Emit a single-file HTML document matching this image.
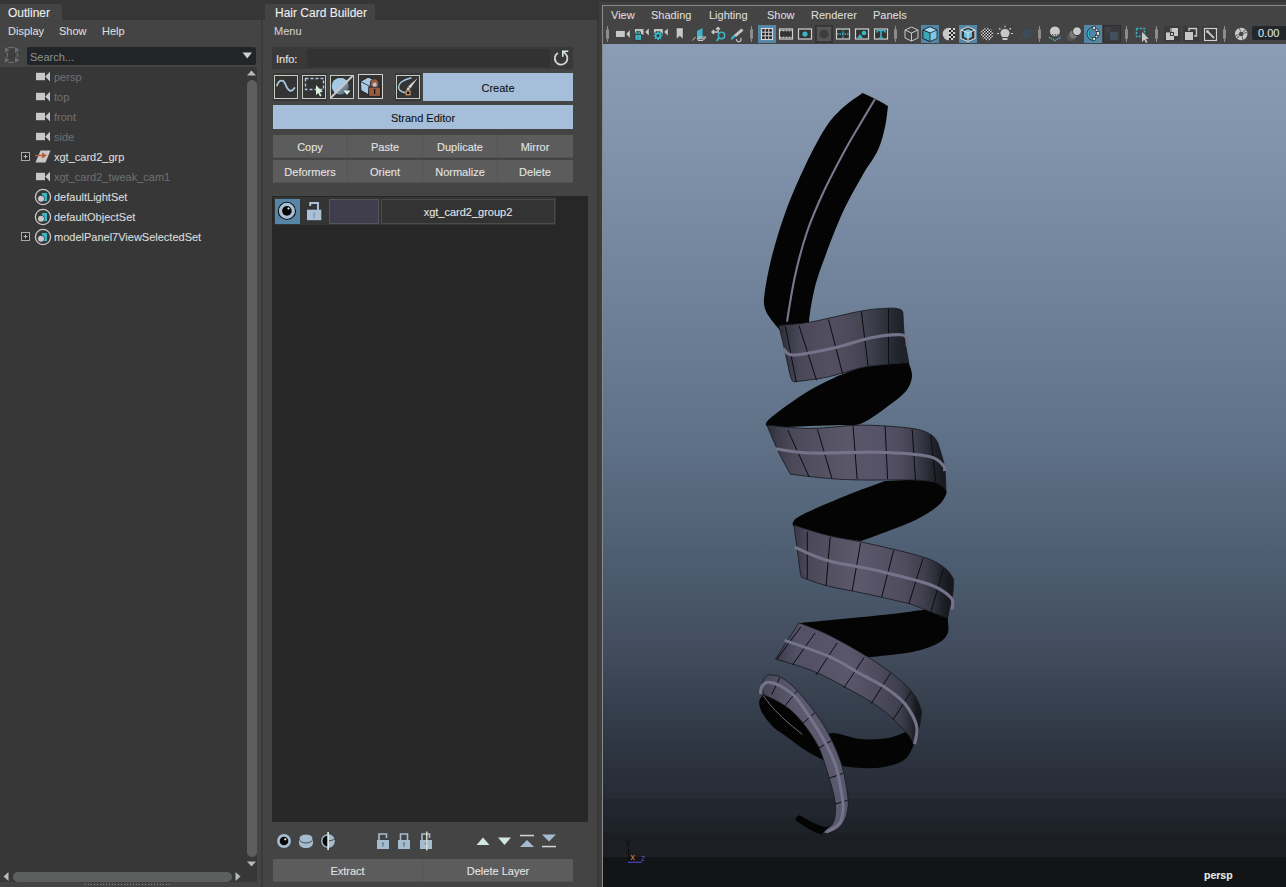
<!DOCTYPE html>
<html><head><meta charset="utf-8">
<style>
*{box-sizing:border-box;margin:0;padding:0}
html,body{width:1286px;height:887px;overflow:hidden;background:#444;font-family:"Liberation Sans",sans-serif;font-size:11px;color:#ddd}
.a{position:absolute}
.t{position:absolute;white-space:nowrap;line-height:1;-webkit-text-stroke:0.1px currentColor}
</style></head>
<body>
<!-- top strip -->
<div class="a" style="left:0;top:0;width:1286px;height:20px;background:#363636"></div>

<!-- ===== OUTLINER ===== -->
<div class="a" style="left:0;top:20px;width:261px;height:867px;background:#444"></div>
<div class="a" style="left:0;top:4px;width:62px;height:16px;background:#444;border-radius:2px 2px 0 0"></div>
<div class="t" style="left:8px;top:7px;font-size:12px;color:#eee">Outliner</div>
<div class="t" style="left:8px;top:26px;color:#ddd">Display</div>
<div class="t" style="left:59px;top:26px;color:#ddd">Show</div>
<div class="t" style="left:102px;top:26px;color:#ddd">Help</div>
<svg class="a" style="left:4px;top:46px" width="17" height="18"><rect x="4.5" y="2.5" width="7" height="13" fill="#3e3e3e"/><g fill="#6a6e71"><path d="M1 1 L5.3 3.9 L1 6.9Z"/><path d="M11 1 L15.4 3.9 L11 6.9Z"/><path d="M1 11.2 L5.3 14 L1 16.8Z"/><path d="M11 11.2 L15.4 14 L11 16.8Z"/><rect x="4.2" y="1" width="5.8" height="1.1"/><rect x="4.2" y="15.8" width="5.8" height="1.1"/><rect x="2.9" y="6.9" width="1.1" height="4.3"/><rect x="12.9" y="6.9" width="1.1" height="4.3"/></g></svg>
<!-- search -->
<div class="a" style="left:27px;top:47px;width:229px;height:18px;background:#222528;border-radius:2px"></div>
<div class="t" style="left:30px;top:52px;color:#8a8a8a">Search...</div>
<svg class="a" style="left:242px;top:52px" width="11" height="8"><path d="M0.5 0.5 H10 L5.25 6.5Z" fill="#cfcfcf"/></svg>
<!-- list -->
<div class="a" style="left:0;top:67px;width:257px;height:815px;background:#373737"></div>
<div class="a" style="left:261px;top:20px;width:2px;height:867px;background:#3a3a3a"></div>

<svg class="a" style="left:35px;top:71px" width="16" height="12"><rect x="1" y="1.8" width="9" height="7.4" fill="#c8c8c8"/><path d="M10.2 5.6 L15 0.8 L15 10.4 Z" fill="#c8c8c8"/></svg>
<div class="t" style="left:54px;top:72px;color:#6e6e6e">persp</div>
<svg class="a" style="left:35px;top:91px" width="16" height="12"><rect x="1" y="1.8" width="9" height="7.4" fill="#c8c8c8"/><path d="M10.2 5.6 L15 0.8 L15 10.4 Z" fill="#c8c8c8"/></svg>
<div class="t" style="left:54px;top:92px;color:#6e6e6e">top</div>
<svg class="a" style="left:35px;top:111px" width="16" height="12"><rect x="1" y="1.8" width="9" height="7.4" fill="#c8c8c8"/><path d="M10.2 5.6 L15 0.8 L15 10.4 Z" fill="#c8c8c8"/></svg>
<div class="t" style="left:54px;top:112px;color:#6e6e6e">front</div>
<svg class="a" style="left:35px;top:131px" width="16" height="12"><rect x="1" y="1.8" width="9" height="7.4" fill="#c8c8c8"/><path d="M10.2 5.6 L15 0.8 L15 10.4 Z" fill="#c8c8c8"/></svg>
<div class="t" style="left:54px;top:132px;color:#6e6e6e">side</div>
<svg class="a" style="left:33px;top:150px" width="20" height="14"><path d="M7.5 0.5 L17.5 0.5 L12.5 12.5 L2.5 12.5 Z" fill="#c8c8c8"/><path d="M2 5.5 L11 5.5" stroke="#b0603a" stroke-width="1.4"/><path d="M9 2.5 L14 5.5 L9 8.5 Z" fill="#b0603a"/></svg>
<svg class="a" style="left:20px;top:151px" width="11" height="11"><rect x="1.5" y="1.5" width="8" height="8" fill="#2b2b2b" stroke="#aaa" stroke-width="1"/><path d="M5.5 3.5V7.5M3.5 5.5H7.5" stroke="#bbb" stroke-width="1"/></svg>
<div class="t" style="left:54px;top:152px;color:#dcdcdc">xgt_card2_grp</div>
<svg class="a" style="left:35px;top:171px" width="16" height="12"><rect x="1" y="1.8" width="9" height="7.4" fill="#c8c8c8"/><path d="M10.2 5.6 L15 0.8 L15 10.4 Z" fill="#c8c8c8"/></svg>
<div class="t" style="left:54px;top:172px;color:#6e6e6e">xgt_card2_tweak_cam1</div>
<svg class="a" style="left:34px;top:188px" width="18" height="18"><circle cx="9" cy="9" r="7.6" fill="none" stroke="#c8c8c8" stroke-width="1.3"/><rect x="8" y="5" width="5" height="8" fill="#3db5c4"/><circle cx="7" cy="10.5" r="3.6" fill="#373737"/><circle cx="7" cy="10.8" r="3" fill="#c8c8c8"/></svg>
<div class="t" style="left:54px;top:192px;color:#dcdcdc">defaultLightSet</div>
<svg class="a" style="left:34px;top:208px" width="18" height="18"><circle cx="9" cy="9" r="7.6" fill="none" stroke="#c8c8c8" stroke-width="1.3"/><rect x="8" y="5" width="5" height="8" fill="#3db5c4"/><circle cx="7" cy="10.5" r="3.6" fill="#373737"/><circle cx="7" cy="10.8" r="3" fill="#c8c8c8"/></svg>
<div class="t" style="left:54px;top:212px;color:#dcdcdc">defaultObjectSet</div>
<svg class="a" style="left:34px;top:228px" width="18" height="18"><circle cx="9" cy="9" r="7.6" fill="none" stroke="#c8c8c8" stroke-width="1.3"/><rect x="8" y="5" width="5" height="8" fill="#3db5c4"/><circle cx="7" cy="10.5" r="3.6" fill="#373737"/><circle cx="7" cy="10.8" r="3" fill="#c8c8c8"/></svg>
<svg class="a" style="left:20px;top:231px" width="11" height="11"><rect x="1.5" y="1.5" width="8" height="8" fill="#2b2b2b" stroke="#aaa" stroke-width="1"/><path d="M5.5 3.5V7.5M3.5 5.5H7.5" stroke="#bbb" stroke-width="1"/></svg>
<div class="t" style="left:54px;top:232px;color:#dcdcdc">modelPanel7ViewSelectedSet</div>
<!-- vertical scrollbar -->
<svg class="a" style="left:246px;top:70px" width="11" height="6"><path d="M1 5.5 L5.5 0.5 L10 5.5Z" fill="#b4bcb8"/></svg>
<div class="a" style="left:247px;top:80px;width:10px;height:777px;background:#5d5f5e;border-radius:5px"></div>
<svg class="a" style="left:246px;top:861px" width="11" height="6"><path d="M1 0.5 L5.5 5.5 L10 0.5Z" fill="#b4bcb8"/></svg>
<!-- horizontal scrollbar -->
<svg class="a" style="left:2px;top:871px" width="7" height="11"><path d="M6.5 1 L1.5 5.5 L6.5 10Z" fill="#b4bcb8"/></svg>
<div class="a" style="left:13px;top:872px;width:219px;height:10px;background:#5d5f5e;border-radius:5px"></div>
<svg class="a" style="left:235px;top:871px" width="7" height="11"><path d="M0.5 1 L5.5 5.5 L0.5 10Z" fill="#b4bcb8"/></svg>
<div class="a" style="left:85px;top:884px;width:86px;height:1px;background:repeating-linear-gradient(90deg,#888 0 1px,transparent 1px 3px)"></div>

<!-- ===== HAIR CARD BUILDER ===== -->
<div class="a" style="left:263px;top:20px;width:334px;height:867px;background:#444"></div>
<div class="a" style="left:265px;top:4px;width:110px;height:16px;background:#444;border-radius:2px 2px 0 0"></div>
<div class="t" style="left:275px;top:7px;font-size:12px;color:#eee">Hair Card Builder</div>
<div class="t" style="left:274px;top:26px;color:#ccc">Menu</div>


<!-- info -->
<div class="a" style="left:272px;top:47px;width:301px;height:22px;background:#393939"></div>
<div class="a" style="left:307px;top:49px;width:243px;height:18px;background:#323232;border-radius:2px"></div>
<div class="t" style="left:276px;top:54px;color:#e8e8e8">Info:</div>
<svg class="a" style="left:552px;top:49px" width="18" height="18"><path d="M5.85 3.9 A6.3 6.3 0 1 0 13.6 4.9 L11 2.6" fill="none" stroke="#d2d6d0" stroke-width="1.8"/><path d="M10 1.4 H16.3 V3 H11.6 V7.8 H10Z" fill="#d6ece0"/></svg>
<!-- icon buttons -->
<div class="a" style="left:273px;top:73px;width:26px;height:28px;background:#373737"></div>
<div class="a" style="left:274px;top:75px;width:23.5px;height:23.5px;background:#333;border:1.5px solid #c3cbbf"></div>
<svg class="a" style="left:274px;top:75px" width="24" height="24"><path d="M3 10.5 C5 4.5 9.5 4 11.5 9.5 S17 18.5 20.5 13" fill="none" stroke="#a8c6de" stroke-width="1.8" stroke-linecap="round"/></svg>
<div class="a" style="left:301px;top:73px;width:26px;height:28px;background:#373737"></div>
<div class="a" style="left:302px;top:75px;width:23.5px;height:23.5px;background:#333;border:1.5px solid #c3cbbf"></div>
<svg class="a" style="left:302px;top:75px" width="24" height="24"><rect x="3.5" y="3.5" width="18" height="11" fill="none" stroke="#a8c6de" stroke-width="1.4" stroke-dasharray="3 2"/><path d="M14 10 L14 20 L16.3 18 L18 21.5 L19.5 20.8 L17.8 17.3 L20.8 17Z" fill="#d9efe0"/></svg>
<div class="a" style="left:330px;top:75px;width:23.5px;height:23.5px;background:#333;border:1.5px solid #c3cbbf"></div>
<svg class="a" style="left:330px;top:75px" width="24" height="24"><defs><linearGradient id="sg" x1="0" y1="0" x2="1" y2="1"><stop offset="0.45" stop-color="#8fa9c0"/><stop offset="1" stop-color="#445466"/></linearGradient><clipPath id="cl"><path d="M0 0 H23 L0 23Z"/></clipPath></defs><circle cx="10.3" cy="11.3" r="8.4" fill="url(#sg)"/><circle cx="10.3" cy="11.3" r="8.4" fill="#a6c8e2" clip-path="url(#cl)"/><path d="M1 22.5 L22.5 1" stroke="#c9c9c6" stroke-width="1.9"/><path d="M13.5 15.5 L20.5 15.5 L17 20Z" fill="#d8f2e4"/></svg>
<div class="a" style="left:358px;top:74px;width:25px;height:25px;background:#333;border:1.5px solid #d0d0d0"></div>
<svg class="a" style="left:358px;top:74px" width="25" height="25"><path d="M2.4 7.5 L10 3.2 L17 5.8 L17 14 L10.6 20.8 L3 16.6 Z" fill="#a9c9e5" stroke="#1c1c1c" stroke-width="0.9"/><path d="M2.4 7.5 L11.8 12.3 L17 9.5 M11.8 12.3 L10.6 20.8" fill="none" stroke="#1c1c1c" stroke-width="0.8"/><path d="M12.3 13.4 V9 A3.7 3.7 0 0 1 20.8 9 V13.4Z" fill="#9a5c40" stroke="#1c1c1c" stroke-width="0.8"/><path d="M14.9 13.4 V10.3 A1.8 1.8 0 0 1 18.5 10.3 V13.4Z" fill="#a9c9e5"/><rect x="10.7" y="13.1" width="11.8" height="9.2" fill="#9a5c40" stroke="#1c1c1c" stroke-width="0.8"/><rect x="16" y="15" width="1.3" height="5" fill="#151515"/></svg>
<div class="a" style="left:395px;top:73px;width:26px;height:28px;background:#373737"></div>
<div class="a" style="left:396px;top:75px;width:23.5px;height:23.5px;background:#333;border:1.5px solid #c3cbbf"></div>
<svg class="a" style="left:396px;top:75px" width="24" height="24"><path d="M15.5 2.8 C9 4.5 3 7.5 2.6 11.5 C2.3 14.5 5 17 9.5 17.8" fill="none" stroke="#a8c8e0" stroke-width="1.4"/><path d="M21 3.3 L14.5 8.8 L11.5 12 L9.8 15 L12.8 15.6 L15.6 12.2 L17.5 9.5 L21.5 3.8Z" fill="#d4d8d0" stroke="#1e1e1e" stroke-width="0.6"/><path d="M11.6 12.2 L14.8 13.6" stroke="#555" stroke-width="0.6"/><rect x="10.2" y="15.9" width="3.8" height="3.9" fill="#111" stroke="#e8aa6a" stroke-width="1.1"/></svg>
<!-- Create -->
<div class="a" style="left:423px;top:73px;width:150px;height:28px;background:#a5bfdb"></div>
<div class="t" style="left:423px;top:83px;width:150px;text-align:center;color:#111">Create</div>
<!-- Strand Editor -->
<div class="a" style="left:273px;top:105px;width:300px;height:24px;background:#a5bfdb"></div>
<div class="t" style="left:273px;top:113px;width:300px;text-align:center;color:#111">Strand Editor</div>
<div class="a" style="left:273px;top:135px;width:300px;height:23px;background:#5c5c5c;border-bottom:1px solid #525252"></div>
<div class="a" style="left:347px;top:135px;width:1px;height:22px;background:#545454"></div>
<div class="a" style="left:422px;top:135px;width:1px;height:22px;background:#545454"></div>
<div class="a" style="left:497px;top:135px;width:1px;height:22px;background:#545454"></div>
<div class="a" style="left:273px;top:160px;width:300px;height:23px;background:#5c5c5c;border-bottom:1px solid #525252"></div>
<div class="a" style="left:347px;top:160px;width:1px;height:22px;background:#545454"></div>
<div class="a" style="left:422px;top:160px;width:1px;height:22px;background:#545454"></div>
<div class="a" style="left:497px;top:160px;width:1px;height:22px;background:#545454"></div>
<div class="t" style="left:273px;top:142px;width:74px;text-align:center;color:#e4e4e4">Copy</div>
<div class="t" style="left:348px;top:142px;width:74px;text-align:center;color:#e4e4e4">Paste</div>
<div class="t" style="left:423px;top:142px;width:74px;text-align:center;color:#e4e4e4">Duplicate</div>
<div class="t" style="left:498px;top:142px;width:74px;text-align:center;color:#e4e4e4">Mirror</div>
<div class="t" style="left:273px;top:167px;width:74px;text-align:center;color:#e4e4e4">Deformers</div>
<div class="t" style="left:348px;top:167px;width:74px;text-align:center;color:#e4e4e4">Orient</div>
<div class="t" style="left:423px;top:167px;width:74px;text-align:center;color:#e4e4e4">Normalize</div>
<div class="t" style="left:498px;top:167px;width:74px;text-align:center;color:#e4e4e4">Delete</div>

<!-- layer list -->
<div class="a" style="left:272px;top:196px;width:316px;height:626px;background:#272727"></div>
<div class="a" style="left:274px;top:197px;width:282px;height:28px;background:#343434"></div>
<div class="a" style="left:275px;top:199px;width:25px;height:25px;background:#5586a8"></div>
<svg class="a" style="left:275px;top:199px" width="25" height="25"><circle cx="11.9" cy="11.9" r="8.6" fill="#a9c0d6" stroke="#111" stroke-width="1.1"/><circle cx="11.9" cy="11.9" r="4.8" fill="#050505"/><circle cx="13.5" cy="9.5" r="1.1" fill="#e8f4ea"/></svg>
<svg class="a" style="left:305px;top:200px" width="18" height="22"><path d="M5.2 6 V3 H13 V10" fill="none" stroke="#a9c0d6" stroke-width="2"/><rect x="2" y="9.7" width="14.3" height="10.5" fill="#a9c0d6"/><rect x="8.3" y="12" width="1.8" height="6" fill="#8aa0b2"/></svg>
<div class="a" style="left:329px;top:199px;width:50px;height:25px;background:#3f3d4b;border:1px solid #55545a"></div>
<div class="a" style="left:381px;top:199px;width:174px;height:25px;background:#333;border:1px solid #4a4a4a"></div>
<div class="t" style="left:381px;top:207px;width:174px;text-align:center;color:#e4e4e4">xgt_card2_group2</div>


<!-- bottom icons -->
<svg class="a" style="left:275px;top:832px" width="17" height="18"><circle cx="9" cy="9" r="7.4" fill="#a5bcd0" stroke="#222" stroke-width="0.6"/><circle cx="9" cy="9" r="4.3" fill="#080808"/><circle cx="10.3" cy="7.3" r="1.1" fill="#eee"/></svg>
<svg class="a" style="left:298px;top:832px" width="17" height="18"><path d="M1 6.5 V11 C1 14 4 16 8 16 C12 16 15 14 15 11 V6.5Z" fill="#a5bcd0"/><ellipse cx="8" cy="6.5" rx="7" ry="4.5" fill="#a5bcd0" stroke="#2c2c2c" stroke-width="0.8"/></svg>
<svg class="a" style="left:320px;top:831px" width="17" height="20"><circle cx="8" cy="10" r="7.3" fill="#a5bcd0" stroke="#222" stroke-width="0.6"/><path d="M8 4.5 A5.5 5.5 0 0 0 8 15.5Z" fill="#080808"/><path d="M8 10 C10 10 14 9 15 7.5" fill="none" stroke="#2c2c2c" stroke-width="0.8"/><rect x="7.3" y="1" width="1.6" height="18" fill="#e0eee4"/></svg>
<svg class="a" style="left:376px;top:832px" width="14" height="18"><path d="M3 8 V2 H10.5 V6" fill="none" stroke="#a5bcd0" stroke-width="1.6"/><rect x="1" y="8" width="12" height="9" fill="#a5bcd0"/><circle cx="7" cy="11.5" r="1.3" fill="#6f8698"/><rect x="6.4" y="11.5" width="1.2" height="3.5" fill="#6f8698"/></svg>
<svg class="a" style="left:397px;top:832px" width="14" height="18"><path d="M3.5 8 V2 H10.5 V8" fill="none" stroke="#a5bcd0" stroke-width="1.6"/><rect x="1" y="8" width="12" height="9" fill="#a5bcd0"/><circle cx="7" cy="11.5" r="1.3" fill="#6f8698"/><rect x="6.4" y="11.5" width="1.2" height="3.5" fill="#6f8698"/></svg>
<svg class="a" style="left:419px;top:831px" width="14" height="20"><path d="M3 9 V3 H10.5 V7" fill="none" stroke="#a5bcd0" stroke-width="1.6"/><rect x="1" y="9" width="12" height="9" fill="#a5bcd0"/><circle cx="7" cy="12.5" r="1.3" fill="#6f8698"/><rect x="7" y="0.5" width="1.5" height="19" fill="#d8d8c8"/></svg>
<svg class="a" style="left:475px;top:834px" width="84" height="15"><path d="M1.5 11 L8 3.5 L14.5 11Z" fill="#d2e8dc"/><path d="M23 3.5 L29.5 11 L36 3.5Z" fill="#d2e8dc"/><rect x="45" y="0.8" width="14" height="1.5" fill="#d4d4d4"/><path d="M45 13 L52 6 L59 13Z" fill="#a5bcd0"/><path d="M67 0.5 L74 7.5 L81 0.5Z" fill="#a5bcd0"/><rect x="67" y="11.8" width="14" height="1.5" fill="#d4d4d4"/></svg>
<!-- Extract / Delete Layer -->
<div class="a" style="left:273px;top:859px;width:300px;height:23px;background:#5c5c5c;border-bottom:1px solid #525252"></div><div class="a" style="left:422px;top:859px;width:1px;height:22px;background:#545454"></div>
<div class="t" style="left:273px;top:866px;width:149px;text-align:center;color:#e4e4e4">Extract</div>

<div class="t" style="left:423px;top:866px;width:150px;text-align:center;color:#e4e4e4">Delete Layer</div>

<!-- ===== VIEWPORT ===== -->
<div class="a" style="left:597px;top:0;width:2px;height:887px;background:#363636"></div>
<div class="a" style="left:599px;top:2px;width:687px;height:885px;background:#3e3e3e"></div>
<div class="a" style="left:602px;top:5px;width:684px;height:882px;background:#444;border-left:1px solid #8a8a8a;border-top:1px solid #8a8a8a"></div>
<div class="a" style="left:603px;top:44px;width:683px;height:843px;background:linear-gradient(#8a9db4 0px,#8194ac 96px,#5f7187 396px,#506075 496px,#434f60 596px,#2f3744 696px,#262b34 755px,#22262e 755px,#22262e 773px,#1e2229 773px,#1e2229 789px,#1b1e23 789px,#1b1e23 813px,#131416 813px)"></div>

<!-- viewport menu -->
<div class="t" style="left:611px;top:10px;color:#dcdcdc">View</div>
<div class="t" style="left:651px;top:10px;color:#dcdcdc">Shading</div>
<div class="t" style="left:709px;top:10px;color:#dcdcdc">Lighting</div>
<div class="t" style="left:767px;top:10px;color:#dcdcdc">Show</div>
<div class="t" style="left:811px;top:10px;color:#dcdcdc">Renderer</div>
<div class="t" style="left:873px;top:10px;color:#dcdcdc">Panels</div>
<div class="a" style="left:607px;top:26px;width:1px;height:16px;background:#8c8c8c"></div><div class="a" style="left:606px;top:29px;width:3px;height:10px;background:#8c8c8c;border-radius:1px"></div><svg class="a" style="left:614px;top:26px" width="140" height="17">
<g fill="#c8c8c8" stroke="#262626" stroke-width="0.3">
<rect x="1.8" y="4.8" width="9.2" height="6.3"/><path d="M12 8 L16 3.8 L16 12.2Z"/>
<rect x="20.8" y="2.9" width="9" height="6"/><path d="M31 6 L35 2 L35 10Z"/>
<rect x="39.8" y="2.9" width="9.2" height="6"/><path d="M50 6 L54 2 L54 10Z"/>
<path d="M62.5 2 H69 V13 L65.75 10 L62.5 13Z"/>
</g>
<path d="M22.6 8.8 V7.6 A1.65 1.65 0 0 1 25.9 7.6 V8.8" fill="none" stroke="#222" stroke-width="2.3"/>
<path d="M22.6 8.8 V7.6 A1.65 1.65 0 0 1 25.9 7.6 V8.8" fill="none" stroke="#3db5c4" stroke-width="1.2"/>
<rect x="21" y="8.6" width="6.4" height="5.6" fill="#3db5c4" stroke="#222" stroke-width="0.6"/><rect x="23.7" y="10.4" width="1" height="2" fill="#3a7a88"/>
<circle cx="44" cy="9.7" r="4.6" fill="#262626"/>
<circle cx="44" cy="9.7" r="3.2" fill="#3db5c4"/><rect x="46.70" y="8.80" width="1.8" height="1.8" fill="#3db5c4"/><rect x="45.65" y="11.35" width="1.8" height="1.8" fill="#3db5c4"/><rect x="43.10" y="12.40" width="1.8" height="1.8" fill="#3db5c4"/><rect x="40.55" y="11.35" width="1.8" height="1.8" fill="#3db5c4"/><rect x="39.50" y="8.80" width="1.8" height="1.8" fill="#3db5c4"/><rect x="40.55" y="6.25" width="1.8" height="1.8" fill="#3db5c4"/><rect x="43.10" y="5.20" width="1.8" height="1.8" fill="#3db5c4"/><rect x="45.65" y="6.25" width="1.8" height="1.8" fill="#3db5c4"/><circle cx="44" cy="9.7" r="1.5" fill="#3a3a3a"/>
<g fill="#3db5c4">


<path d="M83 5 L88.5 2 L88.5 11.5 L83 14.5Z"/>
<circle cx="107.5" cy="9.5" r="3.2" fill="none" stroke="#3db5c4" stroke-width="1.5"/><path d="M105.3 11.8 L102.5 14.8" stroke="#3db5c4" stroke-width="1.8"/>
<path d="M117.5 11 L120.5 8.5 L122 10 L119 13 L116.8 14Z"/>
</g>
<g fill="none" stroke="#c8c8c8" stroke-width="1">
<path d="M78.5 14.5 L81.5 11 M84 11 H92 L89 14.5 H84 M83 12.8 H90.5"/>
<path d="M98 6 H104 V1.5 M102 3.5 L104 1.5 L106 3.5 M100 4 L98 6 L100 8" stroke-width="1.4"/>
<path d="M120 9 L127.5 2.5 L129.5 4.5 L122 11Z" fill="#c8c8c8" stroke="none"/>
<path d="M122.5 13 A2.3 2.3 0 1 0 126.5 12" stroke-width="1.2"/>
</g>
</svg><div class="a" style="left:751px;top:26px;width:1px;height:16px;background:#8c8c8c"></div><div class="a" style="left:750px;top:29px;width:3px;height:10px;background:#8c8c8c;border-radius:1px"></div>
<div class="a" style="left:758px;top:25px;width:18px;height:18px;background:#5285a6"></div>
<svg class="a" style="left:758px;top:25px" width="132" height="18">
<rect x="3.5" y="3.5" width="11" height="11" fill="#222" stroke="#d8d8d8" stroke-width="1.2"/>
<path d="M7.2 3.5V14.5 M10.8 3.5V14.5 M3.5 7.2H14.5 M3.5 10.8H14.5" stroke="#d8d8d8" stroke-width="1"/>
<rect x="21.5" y="4" width="13" height="10" fill="#333" stroke="#d0d0d0" stroke-width="1.2"/>
<path d="M21.5 5.5H34.5 M21.5 12.5H34.5" stroke="#d0d0d0" stroke-width="1.5" stroke-dasharray="2 1"/>
<rect x="40.5" y="4" width="13" height="10" fill="#333" stroke="#d0d0d0" stroke-width="1.2"/>
<circle cx="47" cy="9" r="2.6" fill="#3db5c4"/>
<rect x="57.5" y="0.5" width="17" height="17" fill="#3a3a3a" stroke="#333" stroke-width="1"/>
<rect x="59" y="2" width="14" height="14" fill="#555"/>
<circle cx="66" cy="9" r="4.5" fill="#3e3e3e"/>
<rect x="78.5" y="4" width="13" height="10" fill="#333" stroke="#d0d0d0" stroke-width="1.2"/>
<path d="M79 9H91 M85 4V14" stroke="#3db5c4" stroke-width="1.3" stroke-dasharray="1.5 1"/>
<rect x="97.5" y="4" width="13" height="10" fill="#333" stroke="#d0d0d0" stroke-width="1.2"/>
<path d="M99 13 L102 9 L105 13Z" fill="#3db5c4"/><circle cx="106" cy="8" r="2.3" fill="#3db5c4"/>
<rect x="116.5" y="4" width="13" height="10" fill="#333" stroke="#d0d0d0" stroke-width="1.2"/>
<path d="M119 5.5H127V7.5M119 5.5V7.5 M123 5.5V13 M121 13H125" fill="none" stroke="#3db5c4" stroke-width="1.6"/>
</svg>
<div class="a" style="left:895px;top:26px;width:1px;height:16px;background:#8c8c8c"></div><div class="a" style="left:894px;top:29px;width:3px;height:10px;background:#8c8c8c;border-radius:1px"></div>
<div class="a" style="left:921px;top:25px;width:18px;height:18px;background:#5285a6"></div>
<div class="a" style="left:959px;top:25px;width:18px;height:18px;background:#5285a6"></div>
<svg class="a" style="left:903px;top:25px" width="135" height="18">
<g fill="none" stroke="#c8c8c8" stroke-width="1">
<path d="M2 5 L8.5 2 L15 5 L15 13 L8.5 16 L2 13Z M2 5 L8.5 8 L15 5 M8.5 8V16"/>
</g>
<path d="M20 5 L27 1.8 L34 5 L34 13.5 L27 16.5 L20 13.5Z" fill="#7ec6e6" stroke="#222" stroke-width="0.8"/>
<path d="M20 5 L27 8 L34 5 L27 1.8Z" fill="#a6dcf2" stroke="#222" stroke-width="0.8"/>
<path d="M20 5 L27 8 V16.5 L20 13.5Z" fill="#3aa8b8" stroke="#222" stroke-width="0.8"/>
<circle cx="46" cy="9" r="6.3" fill="#c8c8c8"/>
<path d="M46 2.7 A6.3 6.3 0 0 1 46 15.3Z" fill="#222"/>
<g fill="#d0d0d0"><rect x="46" y="3" width="2" height="2"/><rect x="48" y="5" width="2" height="2"/><rect x="46" y="7" width="2" height="2"/><rect x="48" y="9" width="2" height="2"/><rect x="46" y="11" width="2" height="2"/><rect x="48" y="13" width="2" height="2"/><rect x="50" y="3" width="2" height="2"/><rect x="50" y="7" width="2" height="2"/><rect x="50" y="11" width="2" height="2"/></g>
<path d="M58 5 L65 1.8 L72 5 L72 13.5 L65 16.5 L58 13.5Z" fill="#333" stroke="#ddd" stroke-width="1.1"/>
<path d="M61 6 L65 4 L69 6 L69 12 L65 14 L61 12Z" fill="#6ec0e0"/>
<path d="M58 5 L65 8 L72 5 M65 8V16.5" fill="none" stroke="#ddd" stroke-width="1"/>
<defs><pattern id="chk" width="3" height="3" patternUnits="userSpaceOnUse"><rect width="3" height="3" fill="#1a1a1a"/><rect width="1.5" height="1.5" fill="#d8d8d8"/><rect x="1.5" y="1.5" width="1.5" height="1.5" fill="#d8d8d8"/></pattern></defs>
<circle cx="84" cy="9" r="6.3" fill="url(#chk)"/>
<path d="M102 4 A4 4 0 0 1 106 10 L105 12 H99 L98 10 A4 4 0 0 1 102 4Z" fill="#c8c8c8"/>
<rect x="99.5" y="13" width="5" height="2" fill="#c8c8c8"/>
<g fill="#c8c8c8"><rect x="101.5" y="0.5" width="1" height="2"/><rect x="96" y="3" width="1.5" height="1.5"/><rect x="106.5" y="3" width="1.5" height="1.5"/><rect x="94" y="8" width="2" height="1"/><rect x="108" y="8" width="2" height="1"/></g>
<circle cx="124" cy="9" r="5" fill="#3d4c58"/>
<path d="M115 12 L119 15" stroke="#4a4a4a" stroke-width="1.6"/>
</svg>
<div class="a" style="left:1039px;top:26px;width:1px;height:16px;background:#8c8c8c"></div><div class="a" style="left:1038px;top:29px;width:3px;height:10px;background:#8c8c8c;border-radius:1px"></div>
<div class="a" style="left:1084px;top:25px;width:18px;height:18px;background:#5285a6"></div>
<svg class="a" style="left:1046px;top:25px" width="80" height="18">
<path d="M3 12.2 L9 15.6 L15 12.2" fill="none" stroke="#36b0c4" stroke-width="1.6" stroke-dasharray="1.3 0.9"/>
<circle cx="8.9" cy="6.4" r="5.4" fill="#c9c9c9" stroke="#2a2a2a" stroke-width="0.7"/>
<path d="M6.3 9 L7.3 10.8 M8.8 9 L9.8 10.8 M11.3 9 L12.3 10.8" stroke="#333" stroke-width="0.9"/>
<circle cx="25" cy="12" r="4" fill="#585858"/>
<circle cx="27.6" cy="9.2" r="4" fill="#7a7a7a"/>
<circle cx="31" cy="6.2" r="4.4" fill="#c9c9c9" stroke="#222" stroke-width="0.8"/>
<path d="M47.5 3.2 A5.6 5.6 0 0 0 47.5 14.4" fill="none" stroke="#1e2a30" stroke-width="2.6"/>
<path d="M47.5 3.4 A5.4 5.4 0 0 0 47.5 14.2" fill="none" stroke="#3cbccc" stroke-width="1.5"/>
<g fill="#ececec" stroke="#1a1a1a" stroke-width="0.6"><rect x="46.8" y="1.6" width="2.6" height="2.6"/><rect x="49.2" y="4" width="2.6" height="2.6"/><rect x="50.6" y="6.6" width="2.6" height="3.6"/><rect x="49.2" y="10.2" width="2.6" height="2.6"/><rect x="46.8" y="12.6" width="2.6" height="2.6"/></g>
<rect x="57.5" y="0.5" width="17" height="17" fill="#3a3a3a" stroke="#303030"/>
<rect x="64" y="7" width="8" height="8" fill="#3f5060"/>
<g fill="#3f5060"><rect x="59.5" y="3" width="1.2" height="1.2"/><rect x="61.5" y="3" width="1.2" height="1.2"/><rect x="63.5" y="3" width="1.2" height="1.2"/><rect x="60.5" y="4.5" width="1.2" height="1.2"/><rect x="62.5" y="4.5" width="1.2" height="1.2"/><rect x="59.5" y="6" width="1.2" height="1.2"/><rect x="61.5" y="6" width="1.2" height="1.2"/><rect x="60.5" y="7.5" width="1.2" height="1.2"/></g>
</svg>
<div class="a" style="left:1126px;top:26px;width:1px;height:16px;background:#8c8c8c"></div><div class="a" style="left:1125px;top:29px;width:3px;height:10px;background:#8c8c8c;border-radius:1px"></div><svg class="a" style="left:1134px;top:26px" width="16" height="17"><rect x="2.5" y="2.5" width="8" height="8" fill="none" stroke="#3db5c4" stroke-width="1.5" stroke-dasharray="2 1.3"/><path d="M8 6 L8 16 L10.3 13.8 L12 17 L13.5 16.3 L11.8 13 L14.8 12.8Z" fill="#c8c8c8"/></svg><div class="a" style="left:1156px;top:26px;width:1px;height:16px;background:#8c8c8c"></div><div class="a" style="left:1155px;top:29px;width:3px;height:10px;background:#8c8c8c;border-radius:1px"></div>
<div class="a" style="left:1164px;top:26px;width:16px;height:16px;background:#3b3b3b"></div>
<div class="a" style="left:1183px;top:26px;width:16px;height:16px;background:#3b3b3b"></div>
<div class="a" style="left:1202px;top:26px;width:16px;height:16px;background:#3b3b3b"></div>
<svg class="a" style="left:1164px;top:26px" width="56" height="16">
<path d="M6 2 H14 V10 H10 V14 H2 V6 H6Z" fill="#c8c8c8"/>
<path d="M6 6 H10 V10 H6Z" fill="#3b3b3b"/><path d="M7 7 H9 V9 H7Z" fill="#c8c8c8"/>
<path d="M7 2 V6 H2" fill="none" stroke="#3b3b3b" stroke-width="0.8"/>
<rect x="21" y="6" width="8" height="8" fill="#c8c8c8"/>
<path d="M25 5 V2.5 H32.5 V10 H30" fill="none" stroke="#c8c8c8" stroke-width="1.4"/>
<rect x="40.5" y="2.5" width="12" height="12" fill="none" stroke="#d0d0d0" stroke-width="1.2"/>
<path d="M43 5 L50 12" stroke="#c8c8c8" stroke-width="1.8"/><circle cx="43.5" cy="5.5" r="1.5" fill="#c8c8c8"/>
</svg>
<div class="a" style="left:1224px;top:26px;width:1px;height:16px;background:#8c8c8c"></div><div class="a" style="left:1223px;top:29px;width:3px;height:10px;background:#8c8c8c;border-radius:1px"></div><svg class="a" style="left:1234px;top:27px" width="15" height="15"><circle cx="7.2" cy="7" r="6.2" fill="#c8c8c8"/><g fill="#444"><path d="M7.2 7 L5 1.5 L6 1.2Z"/><path d="M7.2 7 L12.5 5 L12.8 6Z"/><path d="M7.2 7 L9.6 12.5 L8.6 12.8Z"/><path d="M7.2 7 L1.8 9 L1.6 8Z"/><path d="M7.2 7 L11 2.5 L11.6 3.2Z"/><path d="M7.2 7 L3.5 11.5 L2.8 10.8Z"/></g><circle cx="7.2" cy="7" r="2.3" fill="#444"/></svg>
<div class="a" style="left:1252px;top:26px;width:34px;height:14px;background:#23272a;border-radius:2px 0 0 2px"></div>
<div class="t" style="left:1258px;top:28px;color:#dde6ee">0.00</div>


<!--SPIRAL--><svg class="a" style="left:603px;top:44px" width="683" height="843"><defs><linearGradient id="b1" gradientUnits="userSpaceOnUse" x1="176" y1="0" x2="306" y2="0"><stop offset="0" stop-color="#2a2e38"/><stop offset="0.06" stop-color="#363844"/><stop offset="0.16" stop-color="#4a4858"/><stop offset="0.39" stop-color="#534f61"/><stop offset="0.58" stop-color="#4a4858"/><stop offset="0.7" stop-color="#3e3f4c"/><stop offset="0.815" stop-color="#2e323c"/><stop offset="0.89" stop-color="#23272f"/><stop offset="0.95" stop-color="#1e2128"/><stop offset="1" stop-color="#22252c"/></linearGradient><linearGradient id="b2" gradientUnits="userSpaceOnUse" x1="164" y1="0" x2="343" y2="0"><stop offset="0" stop-color="#2c2e38"/><stop offset="0.06" stop-color="#3e3d4a"/><stop offset="0.15" stop-color="#4c4a5a"/><stop offset="0.45" stop-color="#5a5769"/><stop offset="0.63" stop-color="#55526a"/><stop offset="0.74" stop-color="#4f4c5e"/><stop offset="0.83" stop-color="#3e3e4c"/><stop offset="0.88" stop-color="#30323d"/><stop offset="0.94" stop-color="#1e2128"/><stop offset="1" stop-color="#15171b"/></linearGradient><linearGradient id="b3" gradientUnits="userSpaceOnUse" x1="191" y1="0" x2="351" y2="0"><stop offset="0" stop-color="#383846"/><stop offset="0.08" stop-color="#4a4858"/><stop offset="0.4" stop-color="#5c596c"/><stop offset="0.54" stop-color="#555266"/><stop offset="0.69" stop-color="#4f4c5e"/><stop offset="0.81" stop-color="#403f4d"/><stop offset="0.88" stop-color="#2e313b"/><stop offset="0.925" stop-color="#1e2128"/><stop offset="0.975" stop-color="#15171b"/><stop offset="1" stop-color="#181a1f"/></linearGradient><linearGradient id="b4" gradientUnits="userSpaceOnUse" x1="172" y1="0" x2="319" y2="0"><stop offset="0" stop-color="#3a3a48"/><stop offset="0.15" stop-color="#535066"/><stop offset="0.5" stop-color="#5a576c"/><stop offset="0.68" stop-color="#4f4c5e"/><stop offset="0.857" stop-color="#3e3e4c"/><stop offset="0.92" stop-color="#2a2d36"/><stop offset="0.97" stop-color="#15171b"/><stop offset="1" stop-color="#15171b"/></linearGradient><linearGradient id="b5" gradientUnits="userSpaceOnUse" x1="157" y1="0" x2="245" y2="0"><stop offset="0" stop-color="#454454"/><stop offset="0.4" stop-color="#5c596e"/><stop offset="1" stop-color="#5a586c"/></linearGradient></defs><path d="M259.7 48.9 C256.4 51.3 246.1 57.8 240.0 63.5 C233.9 69.2 229.2 73.6 223.0 83.0 C216.8 92.4 209.6 106.3 203.0 120.0 C196.4 133.7 189.2 150.0 183.6 165.0 C178.0 180.0 173.2 195.9 169.5 210.0 C165.8 224.1 162.8 240.2 161.6 249.5 C160.4 258.8 160.8 260.9 162.5 266.0 C164.2 271.1 169.4 276.9 172.0 280.4 C174.6 283.9 177.0 285.9 178.0 287.0 L209.0 287.0 C208.5 285.4 205.5 284.8 206.0 277.6 C206.5 270.4 209.0 255.1 211.8 243.8 C214.6 232.5 218.3 222.7 223.0 210.0 C227.7 197.3 233.9 181.0 240.0 167.8 C246.1 154.6 253.9 141.3 259.7 131.0 C265.5 120.7 271.3 114.0 275.0 106.0 C278.7 98.0 280.3 90.3 282.0 83.0 C283.7 75.7 284.5 65.5 285.0 62.0 C282.9 60.8 276.6 57.2 272.4 55.0 C268.2 52.8 261.8 49.9 259.7 48.9 Z" fill="#040404"/><path d="M234.8 332.0 C238.7 330.6 249.9 325.6 258.4 323.7 C266.8 321.8 277.6 321.1 285.5 320.3 C293.4 319.5 302.4 318.9 305.8 318.6 C306.3 320.8 309.3 327.5 309.0 332.0 C308.7 336.5 307.4 341.2 304.0 345.7 C300.6 350.2 296.5 353.6 288.9 359.2 C281.3 364.8 267.0 375.9 258.4 379.5 C249.7 383.1 240.6 380.8 237.0 381.0 C232.1 381.2 219.6 381.6 207.7 382.0 C195.8 382.4 172.5 383.4 165.5 383.7 C165.2 382.7 161.0 381.3 163.8 377.8 C166.6 374.3 175.1 368.0 182.4 362.6 C189.7 357.2 199.0 350.8 207.7 345.7 C216.4 340.6 230.3 334.3 234.8 332.0 Z" fill="#040404"/><path d="M282.1 437.0 C286.6 436.8 300.8 435.7 309.2 436.0 C317.7 436.3 327.2 437.0 332.8 438.6 C338.4 440.2 341.3 444.3 343.0 445.4 C343.0 446.2 344.4 447.7 343.0 450.5 C341.6 453.3 340.1 457.8 334.5 462.3 C328.9 466.8 321.9 471.7 309.2 477.5 C296.5 483.3 266.9 493.8 258.4 497.0 C252.8 496.1 235.9 494.3 224.6 491.9 C213.3 489.5 196.4 484.2 190.8 482.6 C190.7 481.9 188.6 480.4 190.0 478.4 C191.4 476.4 190.7 475.1 199.3 470.7 C207.9 466.3 227.7 457.8 241.5 452.2 C255.3 446.6 275.3 439.5 282.1 437.0 Z" fill="#040404"/><path d="M195.9 579.2 C203.8 578.4 227.0 576.1 243.4 574.5 C259.8 572.9 280.1 570.8 294.2 569.4 C308.3 568.0 319.6 565.2 328.0 566.0 C336.4 566.8 341.9 572.7 344.7 574.0 C344.7 576.5 346.4 585.0 344.7 589.3 C343.0 593.5 340.4 596.4 334.5 599.5 C328.6 602.6 320.7 605.7 309.2 608.0 C297.7 610.3 272.7 612.4 265.4 613.3 C258.9 609.6 238.1 597.1 226.5 591.4 C214.9 585.7 201.0 581.2 195.9 579.2 Z" fill="#040404"/><path d="M311.0 694.0 C310.9 695.2 312.3 697.3 310.6 701.0 C308.9 704.7 306.8 712.2 301.0 716.0 C295.2 719.8 286.6 722.7 276.1 723.7 C265.6 724.7 249.0 724.0 237.8 721.8 C226.6 719.6 218.1 715.2 209.0 710.3 C199.9 705.4 189.6 696.9 183.0 692.2 C176.4 687.5 173.5 686.3 169.5 682.3 C165.5 678.2 160.9 672.1 158.7 667.9 C156.5 663.7 156.0 659.9 156.3 657.0 C156.6 654.1 159.8 651.8 160.5 650.8 C162.8 651.8 169.5 654.5 174.0 657.0 C178.5 659.5 183.1 662.2 187.6 666.1 C192.1 670.0 196.6 674.7 201.1 680.5 C205.6 686.3 212.4 697.6 214.6 701.0 C216.9 699.0 221.1 690.2 228.2 689.2 C235.3 688.2 247.4 694.2 257.0 695.0 C266.6 695.8 277.4 695.3 285.7 694.0 C294.0 692.7 302.6 687.3 306.8 687.3 C311.0 687.3 310.3 692.9 311.0 694.0 Z" fill="#040404"/><path d="M194.5 772.0 C195.0 772.0 195.2 770.8 197.5 771.8 C199.8 772.8 204.7 776.3 208.6 778.1 C212.6 779.9 217.5 782.3 221.2 782.8 C224.9 783.3 229.4 781.3 231.0 781.0 C230.3 782.0 229.0 785.5 227.0 787.0 C225.0 788.5 222.1 790.1 219.0 790.0 C215.9 789.9 212.8 788.7 208.6 786.5 C204.4 784.3 196.0 779.2 193.6 776.8 C191.3 774.4 194.3 772.8 194.5 772.0 Z" fill="#040404"/><path d="M160.5 652.0 C162.0 653.9 165.8 659.2 169.5 663.4 C173.2 667.5 178.0 672.4 183.0 676.9 C188.0 681.4 196.6 688.1 199.3 690.4" stroke="#8c8a9c" stroke-width="0.8" fill="none"/><path d="M175.6 281.4 C181.0 280.8 193.9 280.4 207.7 278.0 C221.5 275.6 245.4 269.3 258.4 267.0 C271.4 264.7 279.0 264.5 285.5 264.2 C292.0 263.9 294.9 264.6 297.3 265.4 C299.7 266.2 299.5 268.2 299.9 268.8 C300.2 272.9 300.5 285.0 301.5 293.3 C302.5 301.6 305.1 314.4 305.8 318.6 C302.4 318.9 293.4 319.5 285.5 320.3 C277.6 321.1 268.5 321.6 258.4 323.7 C248.2 325.8 235.9 330.6 224.6 333.0 C213.3 335.4 196.4 337.2 190.8 338.0 C190.2 337.0 189.1 338.1 187.4 332.0 C185.7 325.9 182.7 310.1 180.7 301.7 C178.7 293.3 176.5 284.8 175.6 281.4 Z" fill="url(#b1)" stroke="#15161c" stroke-width="0.8"/><path d="M163.8 381.1 C171.1 381.7 191.9 384.5 207.7 384.5 C223.5 384.5 241.5 381.1 258.4 381.1 C275.3 381.1 297.7 382.9 309.2 384.5 C320.8 386.1 323.5 388.1 327.7 390.4 C331.9 392.6 333.4 396.7 334.5 398.0 C335.6 401.9 339.9 413.8 341.3 421.7 C342.7 429.6 342.7 441.4 343.0 445.4 C341.3 444.3 338.4 440.2 332.8 438.6 C327.2 437.0 321.6 436.4 309.2 436.0 C296.8 435.6 272.5 436.3 258.4 436.0 C244.3 435.7 236.4 435.4 224.6 434.4 C212.8 433.4 193.6 430.9 187.4 430.2 C185.4 426.5 179.5 416.4 175.6 408.2 C171.7 400.0 165.8 385.6 163.8 381.1 Z" fill="url(#b2)" stroke="#15161c" stroke-width="0.8"/><path d="M190.8 481.1 C196.4 482.8 213.3 488.5 224.6 491.3 C235.9 494.1 247.1 495.6 258.4 498.0 C269.7 500.4 281.0 502.9 292.3 505.7 C303.6 508.5 317.6 511.8 326.0 515.0 C334.4 518.2 338.9 521.6 343.0 525.0 C347.1 528.4 349.3 533.5 350.6 535.2 C350.5 537.8 350.4 545.4 349.7 550.5 C349.0 555.6 347.1 561.8 346.3 565.7 C345.5 569.6 345.0 572.7 344.7 574.1 C341.6 573.0 331.9 569.6 326.0 567.4 C320.1 565.1 314.8 562.4 309.2 560.6 C303.6 558.8 300.8 558.4 292.3 556.4 C283.8 554.4 269.7 551.2 258.4 548.8 C247.1 546.4 234.5 544.5 224.6 542.0 C214.8 539.5 203.5 535.0 199.3 533.6 C199.0 533.0 198.5 535.0 197.6 530.2 C196.8 525.4 195.3 513.0 194.2 504.8 C193.1 496.6 191.4 485.1 190.8 481.1 Z" fill="url(#b3)" stroke="#15161c" stroke-width="0.8"/><path d="M196.0 578.7 C201.1 580.8 214.9 585.6 226.5 591.4 C238.1 597.2 254.1 606.3 265.4 613.3 C276.7 620.3 286.6 627.4 294.2 633.6 C301.8 639.8 306.9 644.9 311.0 650.5 C315.1 656.1 317.4 664.6 318.7 667.4 C318.3 670.2 317.3 678.7 316.0 684.3 C314.7 689.9 311.8 698.2 311.0 701.0 C309.6 698.8 308.2 693.9 302.6 687.7 C297.0 681.5 287.1 671.3 277.2 664.0 C267.3 656.7 254.7 650.0 243.4 643.8 C232.1 637.6 221.4 631.7 209.6 626.9 C197.8 622.1 178.6 617.0 172.4 615.0 L196.0 578.7 Z" fill="url(#b4)" stroke="#15161c" stroke-width="0.8"/><path d="M165.0 630.9 C167.0 631.2 172.3 630.5 176.8 632.7 C181.3 635.0 186.6 638.8 192.1 644.4 C197.7 650.0 204.8 659.0 210.1 666.1 C215.4 673.2 219.4 678.4 224.0 687.0 C228.6 695.6 234.4 707.4 237.8 718.0 C241.2 728.6 243.4 742.2 244.5 750.5 C245.6 758.8 245.2 763.0 244.3 768.0 C243.4 773.0 241.4 777.2 239.0 780.5 C236.6 783.8 233.3 786.0 230.0 787.5 C226.7 789.0 220.8 789.4 219.0 789.8 C220.0 788.8 223.2 785.6 225.0 784.0 C226.8 782.4 228.3 782.2 229.5 780.0 C230.7 777.8 231.9 775.4 232.2 771.0 C232.5 766.6 233.0 761.8 231.4 753.6 C229.8 745.4 225.3 730.6 222.5 721.8 C219.7 713.0 218.2 707.9 214.6 701.0 C211.0 694.1 205.6 686.3 201.1 680.5 C196.6 674.7 192.1 670.0 187.6 666.1 C183.1 662.2 178.5 659.5 174.0 657.0 C169.5 654.5 162.8 651.8 160.5 650.8 C160.3 649.3 159.2 644.7 159.3 642.0 C159.4 639.3 160.3 636.4 161.2 634.5 C162.2 632.6 164.4 631.5 165.0 630.9 Z" fill="url(#b5)" stroke="#15161c" stroke-width="0.8"/><path d="M182.4 282.3L193.3 338.0 M195.9 281.4L213.6 336.4 M225.5 275.5L239.8 330.5 M258.4 267.9L265.2 322.9 M285.5 264.5L285.5 320.3 M184.9 386.2L206.0 432.7 M214.5 385.4L228.9 434.4 M250.0 382.0L254.2 435.2 M282.1 382.0L284.6 435.2 M309.2 385.4L312.5 436.0 M327.7 391.3L332.8 438.6 M204.3 487.9L204.3 535.2 M227.2 493.0L223.0 542.0 M257.6 498.9L249.1 547.1 M290.6 506.5L278.7 553.0 M320.1 514.1L305.8 559.8 M340.4 525.1L327.8 568.2 M197.8 582.9L174.1 615.0 M212.2 588.8L189.3 621.0 M234.1 599.0L213.0 631.1 M261.2 613.3L240.9 643.8 M287.4 629.4L268.0 659.8 M308.5 647.1L289.9 675.9 M176.8 633.6L168.6 650.8 M193.9 647.1L182.2 661.6 M211.9 668.8L198.4 680.5 M228.2 696.9L214.8 704.5 M239.7 729.4L226.3 734.2 M244.5 756.3L232.0 760.1" stroke="#0c0c10" stroke-width="1" fill="none"/><path d="M272.0 55.0 C269.4 59.3 261.8 72.2 256.6 81.0 C251.4 89.8 246.9 97.0 241.0 108.0 C235.1 119.0 227.2 133.7 221.0 147.0 C214.8 160.3 208.8 173.8 204.0 188.0 C199.2 202.2 195.3 217.1 192.0 232.0 C188.7 246.9 185.3 270.0 184.0 277.6" stroke="#7b788d" stroke-width="2.1" fill="none" stroke-linecap="butt"/><path d="M180.7 305.0 C182.4 306.0 182.1 311.3 190.8 311.0 C199.5 310.7 220.3 306.2 233.0 303.4 C245.7 300.6 256.3 296.1 267.0 294.0 C277.7 291.9 291.1 290.5 297.3 290.7 C303.5 290.9 302.9 293.2 304.0 295.0 C305.1 296.8 304.0 300.6 304.0 301.7" stroke="#75738a" stroke-width="3.1" fill="none" stroke-linecap="butt"/><path d="M172.2 404.8 C178.1 405.5 190.5 408.4 207.7 409.0 C224.9 409.6 255.6 407.6 275.3 408.2 C295.0 408.8 315.1 410.1 326.0 412.4 C336.9 414.6 337.8 419.3 340.4 421.7 C343.0 424.1 341.3 426.1 341.5 427.0" stroke="#75738a" stroke-width="3.1" fill="none" stroke-linecap="butt"/><path d="M191.7 503.1 C197.2 505.4 210.7 512.7 224.6 516.6 C238.5 520.5 258.4 522.8 275.3 526.8 C292.2 530.8 313.9 535.8 326.0 540.3 C338.1 544.8 344.2 549.6 348.0 553.8 C351.8 558.0 348.8 563.7 349.0 565.7" stroke="#75738a" stroke-width="3.1" fill="none" stroke-linecap="butt"/><path d="M181.7 596.4 C189.2 599.1 214.0 607.1 226.5 612.6 C239.0 618.1 247.8 624.5 257.0 629.6 C266.2 634.7 274.6 638.5 281.8 643.2 C289.0 648.0 295.6 653.1 300.4 658.1 C305.1 663.1 308.0 668.5 310.3 673.0 C312.6 677.5 313.8 680.9 314.0 685.4 C314.2 689.9 312.0 697.7 311.6 700.2" stroke="#75738a" stroke-width="3.1" fill="none" stroke-linecap="butt"/><path d="M157.4 649.9 C157.6 648.8 157.7 645.3 158.5 643.5 C159.3 641.7 160.6 640.1 162.0 639.2 C163.4 638.4 164.5 638.0 167.0 638.4 C169.5 638.8 172.6 639.3 176.8 641.7 C181.0 644.1 187.3 647.6 192.1 652.6 C196.9 657.6 201.1 664.8 205.6 671.5 C210.1 678.2 214.6 684.9 219.1 693.1 C223.6 701.4 229.1 710.9 232.5 721.0 C235.9 731.1 238.0 746.1 239.3 753.6 C240.5 761.1 240.5 761.7 240.0 766.0 C239.5 770.3 239.3 775.9 236.5 779.6 C233.7 783.3 225.2 786.8 223.0 788.3" stroke="#75738a" stroke-width="3.1" fill="none" stroke-linecap="butt"/></svg><!--/SPIRAL-->
<!-- axis -->
<svg class="a" style="left:622px;top:836px" width="30" height="30"><text x="3.8" y="9" font-family="Liberation Sans" font-size="9" fill="#0c0c0c">y</text><path d="M6.5 12.5 V26" stroke="#0c0c0c" stroke-width="1"/><path d="M6 26.3 H20" stroke="#4646c8" stroke-width="1.2"/><text x="8.5" y="24" font-family="Liberation Sans" font-size="8.5" fill="#e0883a">x</text><text x="19" y="25" font-family="Liberation Sans" font-size="8.5" fill="#4c4cd0">z</text></svg>
<div class="t" style="left:1204px;top:870px;color:#e4ece4;font-weight:bold;font-size:10.5px">persp</div>
</body></html>
